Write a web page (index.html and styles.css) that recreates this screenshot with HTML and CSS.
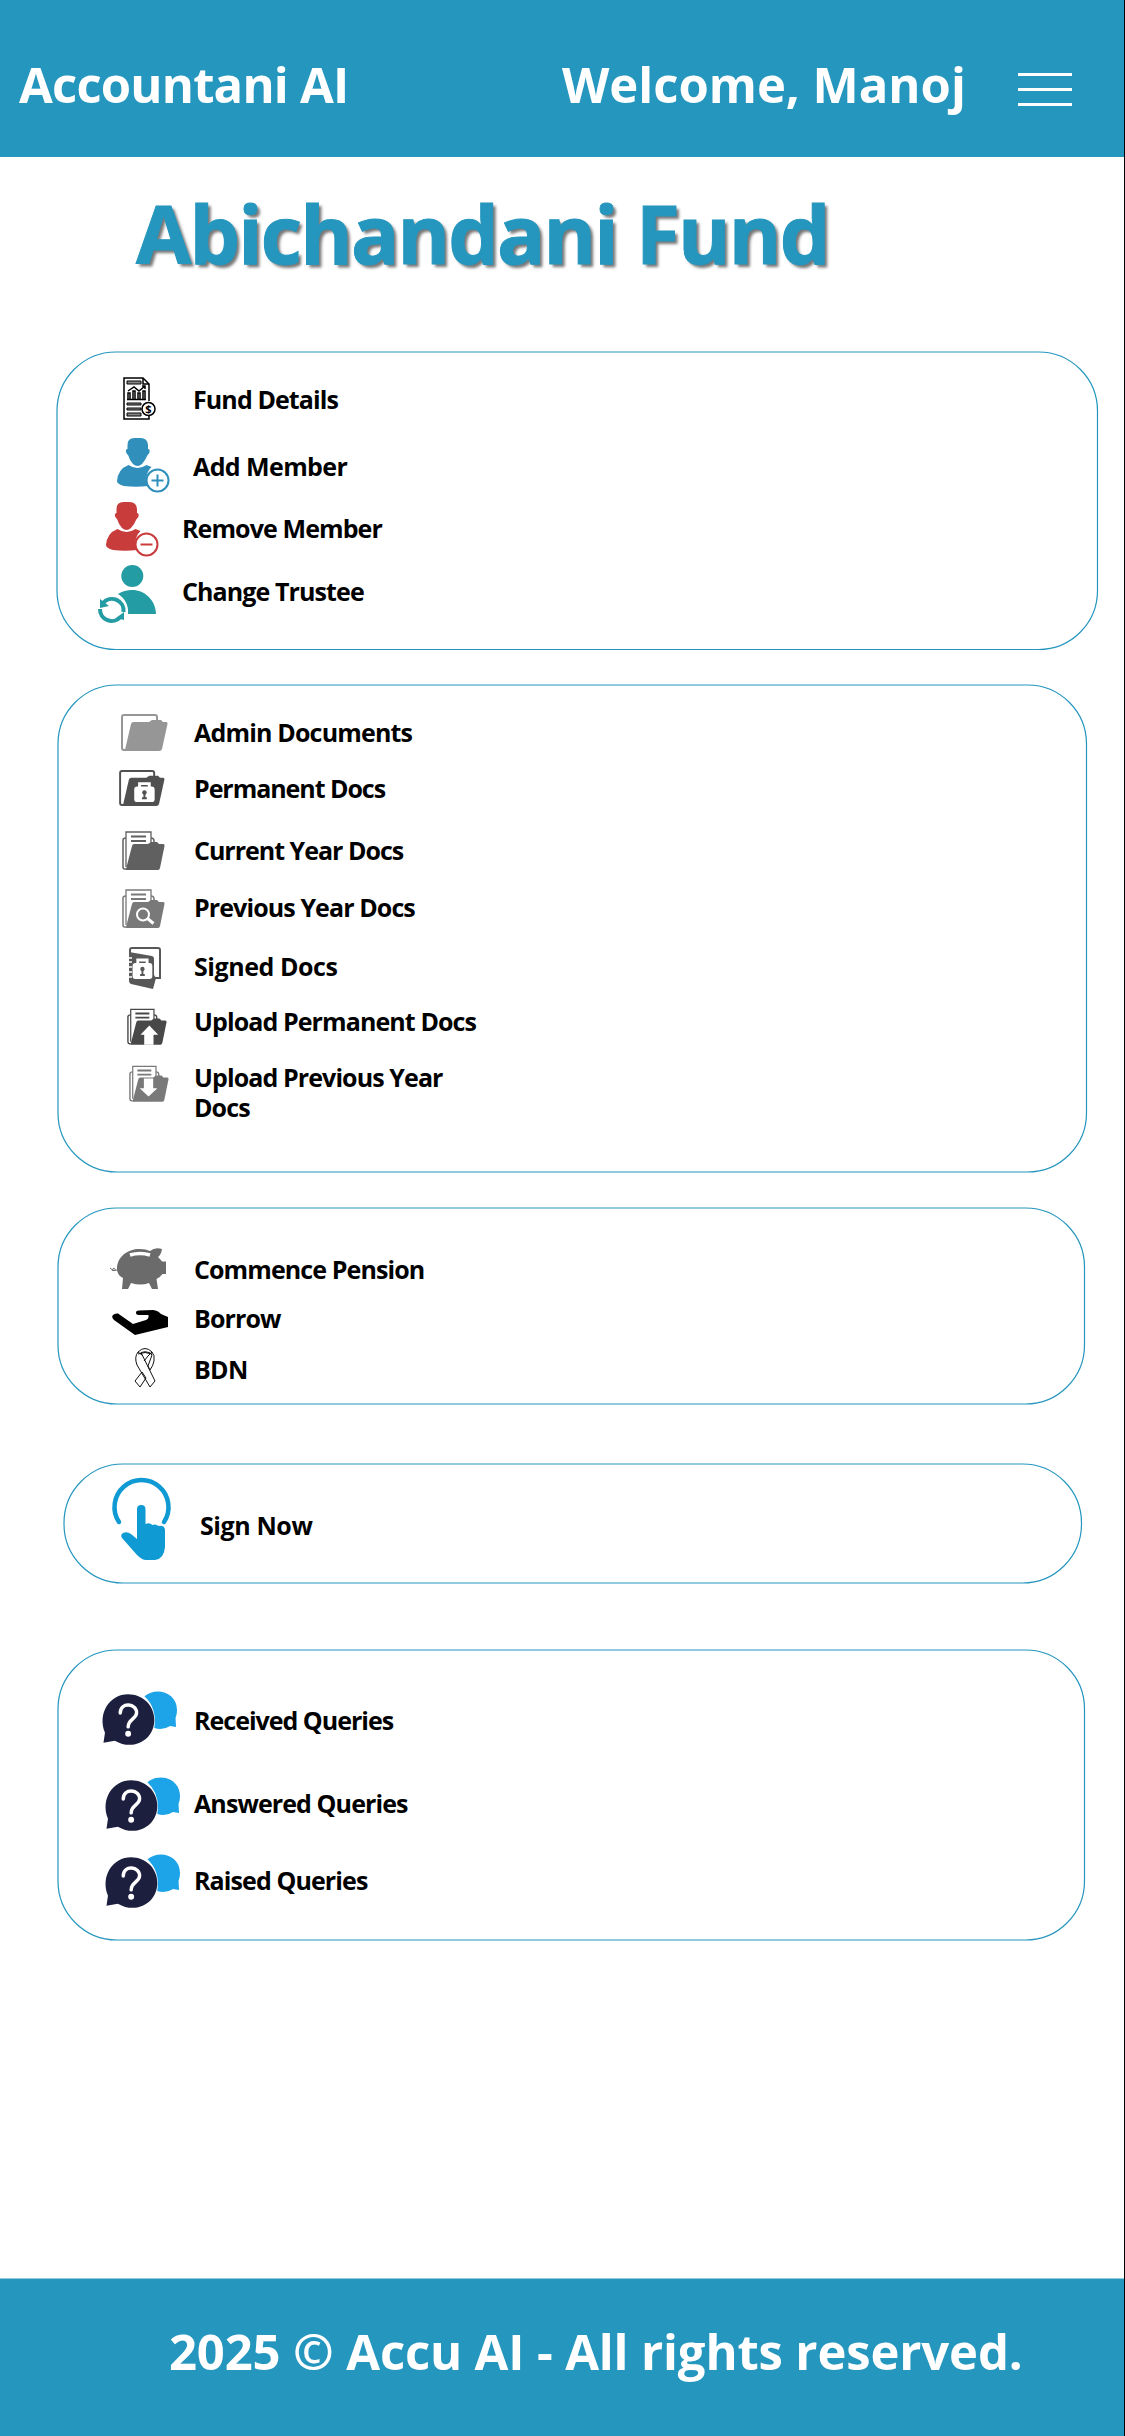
FILE: index.html
```html
<!DOCTYPE html>
<html lang="en"><head><meta charset="utf-8"><title>Accountani AI</title><link rel="stylesheet" href="styles.css"></head>
<body>
<div class="page">
<header class="topbar">
<div class="brand">Accountani AI</div>
<div class="welcome">Welcome, Manoj</div>
<div class="menu"><span></span><span></span><span></span></div>
</header>
<h1 class="title">Abichandani Fund</h1>
<main class="cards">

<section class="card fund">
<svg class="frame"><rect x="0" y="1" width="1040.500" height="297.500" rx="59"/></svg>
<ul class="rows">
<li class="row r1"><svg class="icon" viewBox="0 0 33 43" width="33" height="43"><g fill="none" stroke="#000" stroke-width="1.500"><path d="M26 24V7L20 1H1v41h25v-3"/><path d="M20 1v6h6"/><path fill="#888" d="M4 4h14v3H4zM4 26h14v2H4zM4 31h14v2H4zM4 36h14v3H4z" stroke-width="1"/><path d="M4 22.500h19M5 22v-6h2v6M10 22v-8h2v8M15 22v-6h2v6M20 22v-8h2v8M5 14l6-4 5 4 6-5M19 9h3v3"/><circle cx="25.500" cy="32" r="6.500" fill="#fff"/></g><text x="25.500" y="36.300" text-anchor="middle" class="dollar">$</text></svg><span>Fund Details</span></li>
<li class="row r2"><svg class="icon" viewBox="0 0 53 55" width="53" height="55"><use href="#person" fill="#318fbb"/><g fill="#fff" stroke="#318fbb" stroke-width="2"><circle cx="40.500" cy="42.500" r="11"/><path d="M34.500 42.500h12M40.500 36.500v12"/></g></svg><span>Add Member</span></li>
<li class="row r3"><svg class="icon" viewBox="0 0 53 55" width="53" height="55"><use href="#person" fill="#c93c3c"/><g fill="#fff" stroke="#c93c3c" stroke-width="2"><circle cx="40.500" cy="42.500" r="11"/><path d="M34.500 42.500h12"/></g></svg><span>Remove Member</span></li>
<li class="row r4"><svg class="icon" viewBox="0 0 58 59" width="58" height="59"><circle cx="34.300" cy="11" r="11" fill="#249ca3"/><path fill="#249ca3" d="M20 29c4-2.500 9-4 14-4 13 0 24 10.500 24 24H30c1-8-3-16-10-20z"/><g fill="none" stroke="#249ca3" stroke-width="4"><path d="M5 38a11.700 11.700 0 0 1 20.500 9"/><path d="M22.500 52A11.700 11.700 0 0 1 2 44"/></g><path fill="#249ca3" d="M2 34v9l9-2zM26 47v8l-8-2z"/></svg><span>Change Trustee</span></li>
</ul>
</section>

<section class="card docs">
<svg class="frame"><rect x="0" y="1" width="1028.500" height="487" rx="59"/></svg>
<ul class="rows">
<li class="row r1"><svg class="icon" viewBox="0 0 47 37" width="47" height="37" color="#969696"><use href="#folder"/></svg><span>Admin Documents</span></li>
<li class="row r2"><svg class="icon" viewBox="0 0 47 37" width="46" height="36" color="#505050"><use href="#folder"/><use href="#lock"/></svg><span>Permanent Docs</span></li>
<li class="row r3"><svg class="icon" viewBox="0 0 43 39" width="43" height="39" color="#606060"><use href="#papers"/></svg><span>Current Year Docs</span></li>
<li class="row r4"><svg class="icon" viewBox="0 0 43 39" width="43" height="39" color="#797979"><use href="#papers"/><circle cx="21" cy="25.500" r="6" fill="none" stroke="#fff" stroke-width="2"/><path d="m25.500 29.500 6 5" stroke="#fff" stroke-width="3"/></svg><span>Previous Year Docs</span></li>
<li class="row r5"><svg class="icon" viewBox="0 0 33 42" width="33" height="42" color="#585858"><path fill="none" stroke="currentColor" stroke-width="2" d="M2 6V3q0-2 2-2h26q2 0 2 2v28h-5"/><path fill="currentColor" d="m1 5 23 4q2 .5 2 2.500V28l2 3-3 11-22-5q-2-1-2-3z"/><path stroke="#fff" stroke-width="1.500" d="M0 11h4M0 15h4M0 20h4M0 25h4M0 30h4"/><use href="#lock" transform="translate(-10 -1) scale(.94 1)"/></svg><span>Signed Docs</span></li>
<li class="row r6"><svg class="icon" viewBox="0 0 43 39" width="40" height="37" color="#484848"><use href="#papers"/><path fill="#fff" d="m24 18.500 9.500 10h-5V39h-10V28.500h-4z"/></svg><span>Upload Permanent Docs</span></li>
<li class="row r7"><svg class="icon" viewBox="0 0 43 39" width="40" height="37" color="#797979"><use href="#papers"/><path fill="#fff" d="m21 33.500 9.500-9h-4.500V14H16v10.500h-4.500z"/></svg><span>Upload Previous Year<br>Docs</span></li>
</ul>
</section>

<section class="card pension">
<svg class="frame"><rect x="0" y="1" width="1026.500" height="196" rx="59"/></svg>
<ul class="rows">
<li class="row r1"><svg class="icon" viewBox="0 0 56 42" width="56" height="42"><path fill="#6b6b6b" d="M7 21C7 9 17 1 30 1q6 0 10 2Q45-1 52 1q-1 6-4 8 3 3 4 4.500h4V26h-3.500q-3 4-6 5l1.500 10h-6l-3-6q-8 3-18 0l-3 6h-6l1-11Q7 27 7 21z"/><path d="M20 7q10-3 20 0" fill="none" stroke="#fff" stroke-width="3.500"/><path d="M7 22q-8 2-3-2c3 2 0 4-4 0" fill="none" stroke="#6b6b6b"/></svg><span>Commence Pension</span></li>
<li class="row r2"><svg class="icon" viewBox="0 0 56 26" width="56" height="26"><path d="M6 4.500 21 15l13-4q3-1 2.500-5H27q-3 0-3-2.200T27 1.500L41 1q5 .5 8 4l7 3v10l-33 8L2 11Q-1 8 1 6t5-1.500z"/></svg><span>Borrow</span></li>
<li class="row r3"><svg class="icon" viewBox="0 0 22 40" width="22" height="40"><path fill="none" stroke="#111" stroke-width="1" d="M4 4Q11-3 18 4q3 3 2 9-1 5-4 9l-2-4 4-11q-1-2-3-2.500Q11 3 7 4.500L21 33l-5 6L3 17Q0 9 4 4zM4 4l4 3M18 4l-4 4M8 24l4 6-6 9-5-6zM14 8l-4 5M4 6q7-3 14 0"/></svg><span>BDN</span></li>
</ul>
</section>

<section class="card sign">
<svg class="frame"><rect x="0" y="1" width="1017.500" height="119" rx="59"/></svg>
<ul class="rows">
<li class="row r1"><svg class="icon" viewBox="0 0 59 82" width="59" height="82"><path d="M7 44A27 27 0 1 1 52 44" fill="none" stroke="#0f9ad3" stroke-width="4.500" stroke-linecap="round"/><path fill="#0f9ad3" d="M25 31q0-4 4.200-4t4.300 4v15q4-2 7 1 3-1.500 6 1 6-1 6.500 4v17Q52 81 43 82H34q-4 0-9-5L10 60q-2-3 1-5 4-2 8 1l6 5z"/></svg><span>Sign Now</span></li>
</ul>
</section>

<section class="card queries">
<svg class="frame"><rect x="0" y="1" width="1026.500" height="290" rx="59"/></svg>
<ul class="rows">
<li class="row r1"><svg class="icon" viewBox="0 0 77 56" width="76" height="56"><use href="#ask"/></svg><span>Received Queries</span></li>
<li class="row r2"><svg class="icon" viewBox="0 0 77 56" width="76" height="56"><use href="#ask"/></svg><span>Answered Queries</span></li>
<li class="row r3"><svg class="icon" viewBox="0 0 77 56" width="76" height="56"><use href="#ask"/></svg><span>Raised Queries</span></li>
</ul>
</section>
</main>
<footer class="footer">2025 © Accu AI - All rights reserved.</footer>
</div>

<svg class="symbols" width="0" height="0"><defs>
<g id="person"><path d="M10.500 7q0-7 7-7h6q7 0 7.500 7v4q2.500 0 1.300 4l-2 2.500Q28.500 22 25 26q-4.500 4-9 0-3.500-4-4.700-8.500l-2-2.500q-1.200-4 1.200-4z"/><path d="M11.500 27q9 6 18 0l5 2q-5 5-5 12 0 4 1.500 7-12 1.500-24 0-7-2-7-5Q1 31 11.500 27z"/></g>
<g id="folder"><path fill="none" stroke="currentColor" stroke-width="2" d="M5 36H3q-2 0-2-2V3q0-2 2-2h31q2 0 2 2v4"/><path fill="currentColor" d="M4 36 10 10q.5-2 2.500-2H28l3-2h9l2 2h3q2 0 1.500 2L41 35q-.5 2-3 2H4z"/></g>
<g id="lock"><rect x="15.500" y="17" width="21" height="16" rx="3" fill="#fff"/><path d="M21 18v-4h10v4" fill="none" stroke="#fff" stroke-width="3"/><circle cx="26" cy="23" r="2.300" fill="currentColor"/><path fill="currentColor" d="M25 23h2v5h1.500v2h-5v-2H25z"/></g>
<g id="papers"><path fill="none" stroke="currentColor" stroke-width="1.500" d="M4 38H2.500Q1 38 1 36V9q0-2 3-2M29 7q3 0 3 3v3"/><path fill="#fff" stroke="currentColor" stroke-width="1.300" d="M4 36V1h25v16"/><path stroke="currentColor" stroke-width="2" d="M9 5.500h15M9 10h15"/><path fill="currentColor" d="m4 38 6-23q.5-2 2-2h14l3-2h6l2 2h4q2 0 1.500 2L38 37q-.5 2-2 2H4z"/></g>
<g id="ask"><path fill="#1ca3e8" d="M43 5C55-5 76 1 76 19q0 5-1.500 8l.5 9-6-1q-8 5-16 2Q56 17 43 5z"/><path fill="#1d1f3f" d="M1.500 52 3 42C-5 22 8 3 26.500 3 41 3 53 14 53 29 53 49 32 61 13 50z"/><path d="M18.500 22c0-12 17-10 16.500 0 0 6-8.500 6-8.500 14" fill="none" stroke="#fff" stroke-width="3.500" stroke-linecap="round"/><circle cx="26.500" cy="43" r="3" fill="#fff"/></g>
</defs></svg>
</body></html>
```
FILE: styles.css
```css
* { box-sizing: border-box; }
body { margin: 0; background: #fff; color: #000; font-family: "Open Sans", "Noto Sans", sans-serif; font-weight: 700; }
.page { width: 1125px; height: 2436px; display: flex; flex-direction: column; border-right: 1px solid #000; overflow: hidden; }
.topbar { height: 157px; flex: none; display: flex; background: #2596be; color: #fff; line-height: 60px; padding-top: 54px; white-space: nowrap; }
.brand { margin-left: 19px; width: 543px; font-size: 49px; letter-spacing: -.8px; }
.welcome { width: 456px; font-size: 49px; letter-spacing: 0; }
.menu { display: flex; flex-direction: column; gap: 12px; margin-top: 19px; }
.menu span { width: 54px; height: 3px; background: #fff; }
.title { margin: 31px 0 0 136px; height: 131px; font-size: 80px; line-height: 90px; letter-spacing: -1.800px; color: #2596be; text-shadow: 3px 3px 3px #777; -webkit-text-stroke: 1px #2596be; white-space: nowrap; }
.cards { flex: 1; display: flex; flex-direction: column; }
.card { display: grid; flex: none; }
.frame, .rows { grid-area: 1 / 1; }
.frame { width: 100%; height: 100%; overflow: visible; }
.frame rect { fill: none; stroke: #2596be; stroke-width: 1.200; }
.rows { list-style: none; margin: 0; padding: 0; font-size: 25px; line-height: 30px; letter-spacing: -.9px; white-space: nowrap; }
.row { display: grid; align-items: start; }
.icon { display: block; overflow: visible; margin-top: 1px; }
.dollar { font-size: 11px; letter-spacing: 0; }

.fund { margin: 32px 26px 0 57px; height: 298px; }
.docs { margin: 35px 38px 0 58px; height: 487px; }
.pension { margin: 36px 39px 0 58px; height: 196px; }
.sign { margin: 60px 42px 0 64px; height: 119px; }
.queries { margin: 67px 39px 0 58px; height: 290px; }

.fund .row { grid-template-columns: 136px 1fr; }
.fund .r1 { padding-top: 26px; height: 86px; }
.fund .r1 .icon { margin: 0 0 0 66px; }
.fund .r1 span { padding-top: 7px; }
.fund .r2 { height: 64px; letter-spacing: -.600px; }
.fund .r2 .icon { margin-left: 60px; }
.fund .r2 span { padding-top: 14px; }
.fund .r3, .fund .r4 { grid-template-columns: 125px 1fr; height: 63px; }
.fund .r3 .icon { margin-left: 49px; }
.fund .r3 span, .fund .r4 span { padding-top: 12px; }
.fund .r4 .icon { margin-left: 41px; }

.docs .row, .pension .row, .queries .row { grid-template-columns: 136px 1fr; }
.docs .r1 { padding-top: 29px; height: 85px; letter-spacing: -.820px; }
.docs .r1 .icon { margin-left: 63px; }
.docs .r1 span { padding-top: 4px; }
.docs .r2 { height: 61px; letter-spacing: -1.050px; }
.docs .r2 .icon { margin-left: 61px; }
.docs .r2 span { padding-top: 4px; }
.docs .r3 { height: 58px; letter-spacing: -1px; }
.docs .r3 .icon, .docs .r4 .icon { margin-left: 64px; }
.docs .r3 span { padding-top: 5px; }
.docs .r4 { height: 59px; }
.docs .r4 span { padding-top: 4px; }
.docs .r5 { height: 59px; letter-spacing: -.450px; }
.docs .r5 .icon { margin: 0 0 0 70px; }
.docs .r5 span { padding-top: 4px; }
.docs .r6 { height: 56px; }
.docs .r6 .icon { margin: 2px 0 0 69px; }
.docs .r7 .icon { margin: 3px 0 0 71px; }

.pension .r1 { padding-top: 40px; height: 96px; }
.pension .r1 .icon { margin-left: 52px; }
.pension .r1 span { padding-top: 7px; }
.pension .r2 { height: 44px; }
.pension .r2 .icon { margin: 6px 0 0 54px; }
.pension .r3 { letter-spacing: -.700px; }
.pension .r3 .icon { margin-left: 76px; }
.pension .r3 span { padding-top: 7px; }

.sign .row { grid-template-columns: 136px 1fr; padding-top: 14px; letter-spacing: -.400px; }
.sign .icon { margin-left: 48px; }
.sign span { padding-top: 33px; }

.queries .r1 { padding-top: 41px; height: 127px; letter-spacing: -1px; }
.queries .r1 .icon { margin-left: 44px; }
.queries .r2 { height: 77px; }
.queries .r2 .icon, .queries .r3 .icon { margin-left: 47px; }
.queries .row span { padding-top: 12px; }
.queries .r1 span { padding-top: 15px; }

.footer { height: 158px; flex: none; background: #2596be; border-top: 1px solid #92cade; color: #fff; padding: 42px 0 0 169px; font-size: 49px; letter-spacing: -.150px; line-height: 60px; white-space: nowrap; }
.symbols { display: block; }
```
